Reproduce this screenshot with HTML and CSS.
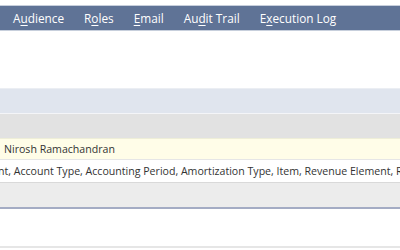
FILE: index.html
```html
<!DOCTYPE html>
<html lang="en">
<head>
    <meta charset="UTF-8">
    <title>Script Deployment</title>
    <link rel="stylesheet" href="styles.css">
</head>
<body>

    <div class="tabs">
        <span class="tab">A<u>u</u>dience</span>
        <span class="tab">R<u>o</u>les</span>
        <span class="tab"><u>E</u>mail</span>
        <span class="tab">Au<u>d</u>it Trail</span>
        <span class="tab">E<u>x</u>ecution Log</span>
    </div>

    <div class="spacer"></div>

    <div class="band band-blue"></div>
    <div class="band band-gray"></div>

    <div class="row row-owner">
        <span class="cell">Nirosh Ramachandran</span>
    </div>
    <div class="row row-records">
        <span class="cell clipped">nt, Account Type, Accounting Period, Amortization Type, Item, Revenue Element, Revenue Plan</span>
    </div>
    <div class="row row-footer"></div>

    <div class="bottom"></div>

</body>
</html>
```

FILE: styles.css
```css
body {
    font-family: 'Open Sans', 'Liberation Sans', sans-serif;
    background-color: white;
    margin: 0;
    padding-top: 5px;
    color: #333;
    font-size: 12px;
    overflow: hidden;
}
.tabs {
    display: flex;
    height: 24px;
    align-items: center;
    background-color: #5f7396;
    border-top: 1px solid #c7cfdc;
    border-bottom: 1px solid #c7cfdc;
    padding-left: 3px;
    white-space: nowrap;
}
.tab {
    color: white;
    font-size: 11.8px;
    padding: 0 10px;
}
.tab u {
    text-decoration-thickness: 1px;
    text-underline-offset: 2px;
}
.spacer {
    height: 57px;
}
.band {
    height: 24px;
}
.band-blue {
    background-color: #e0e5ee;
    border-top: 1px solid #ebeef3;
    border-bottom: 1px solid #f4f5f8;
}
.band-gray {
    background-color: #e2e2e2;
}
.row {
    height: 22px;
    display: flex;
    align-items: center;
    white-space: nowrap;
    overflow: hidden;
}
.row-owner {
    height: 20px;
    background-color: #fffde8;
    border-top: 1px solid #eeeed8;
    border-bottom: 1px solid #e6e6e6;
}
.row-records {
    background-color: white;
    border-bottom: 1px solid #d9d9d9;
}
.row-footer {
    height: 24px;
    background-color: #ececec;
    border-bottom: 2px solid #a4acc4;
}
.cell {
    padding-left: 4px;
    font-size: 10.6px;
    color: #333;
}
.clipped {
    margin-left: -2px;
    padding-left: 0;
}
.bottom {
    height: 37px;
    border-bottom: 2px solid #e6e6e6;
}
```
